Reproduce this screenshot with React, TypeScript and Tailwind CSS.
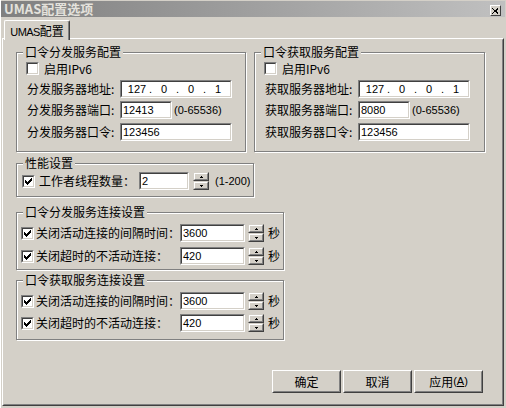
import React from "react";

const CJK = "font-['Noto_Sans_CJK_SC','Noto_Sans_CJK_JP',sans-serif]";
const LAT = "font-['Liberation_Sans',Arial,sans-serif]";

function Edit({ cls, children }: { cls: string; children?: React.ReactNode }) {
  return (
    <div className={`${cls} h-[18px] shrink-0 border border-t-[#808080] border-l-[#808080] border-r-white border-b-white`}>
      <div className={`h-full w-full border border-t-[#404040] border-l-[#404040] border-r-[#d4d0c8] border-b-[#d4d0c8] bg-white flex items-center pl-[1px] text-[11px] leading-none text-black ${LAT}`}>
        {children}
      </div>
    </div>
  );
}

function Check({ checked }: { checked?: boolean }) {
  return (
    <div className="w-[13px] h-[13px] shrink-0 border border-t-[#808080] border-l-[#808080] border-r-white border-b-white">
      <div className="h-full w-full border border-t-[#404040] border-l-[#404040] border-r-[#d4d0c8] border-b-[#d4d0c8] bg-white">
        {checked && (
          <svg width="9" height="9" viewBox="0 0 9 9" className="block" shapeRendering="crispEdges">
            <g fill="#000">
              <rect x="7" y="1" width="1" height="1" />
              <rect x="6" y="2" width="2" height="1" />
              <rect x="1" y="3" width="1" height="1" />
              <rect x="5" y="3" width="3" height="1" />
              <rect x="1" y="4" width="2" height="1" />
              <rect x="4" y="4" width="3" height="1" />
              <rect x="1" y="5" width="5" height="1" />
              <rect x="2" y="6" width="3" height="1" />
              <rect x="3" y="7" width="1" height="1" />
            </g>
          </svg>
        )}
      </div>
    </div>
  );
}

function SpinBtn({ up }: { up?: boolean }) {
  return (
    <div className="h-[9px] w-full border border-t-[#d4d0c8] border-l-[#d4d0c8] border-r-[#404040] border-b-[#404040]">
      <div className="h-full w-full border border-t-white border-l-white border-r-[#808080] border-b-[#808080] bg-[#d4d0c8] flex items-center justify-center">
        <svg width="3" height="2" viewBox="0 0 3 2" className="block" shapeRendering="crispEdges">
          {up ? (
            <g fill="#000">
              <rect x="1" y="0" width="1" height="1" />
              <rect x="0" y="1" width="3" height="1" />
            </g>
          ) : (
            <g fill="#000">
              <rect x="0" y="0" width="3" height="1" />
              <rect x="1" y="1" width="1" height="1" />
            </g>
          )}
        </svg>
      </div>
    </div>
  );
}

function Spin({ cls }: { cls: string }) {
  return (
    <div className={`${cls} w-[16px] h-[18px] shrink-0 flex flex-col`}>
      <SpinBtn up />
      <SpinBtn />
    </div>
  );
}

function Group({ title, cls, children }: { title: string; cls: string; children?: React.ReactNode }) {
  return (
    <fieldset className={`${cls} shrink-0 border border-[#808080] shadow-[1px_1px_0_#ffffff,inset_1px_1px_0_#ffffff]`}>
      <legend className={`ml-[6px] px-[2px] h-[14px] leading-[14px] text-[12px] bg-[#d4d0c8] ${CJK}`}>{title}</legend>
      {children}
    </fieldset>
  );
}

function Button({ children }: { children: React.ReactNode }) {
  return (
    <div className="w-[69px] h-[23px] border border-t-white border-l-white border-r-[#404040] border-b-[#404040]">
      <div className={`h-full w-full border border-t-[#d4d0c8] border-l-[#d4d0c8] border-r-[#808080] border-b-[#808080] flex items-center justify-center text-[12px] leading-none ${CJK}`}>
        {children}
      </div>
    </div>
  );
}

function ServerGroup({ title, prefix, port, cls }: { title: string; prefix: string; port: string; cls: string }) {
  return (
    <Group title={title} cls={cls}>
      <div className="mt-[3px] ml-[9px] h-[13px] flex items-center">
        <Check />
        <span className={`ml-[5px] text-[12px] leading-none ${CJK}`}>启用IPv6</span>
      </div>
      <div className="mt-[5px] ml-[10px] flex items-center h-[18px]">
        <span className={`w-[93px] shrink-0 text-[12px] leading-none ${CJK}`}>{prefix}服务器地址:</span>
        <Edit cls="w-[112px]">
          <div className="flex pl-[3px]">
            <span className="w-[22px] text-center">127</span>
            <span className="w-[5px] text-center">.</span>
            <span className="w-[22px] text-center">0</span>
            <span className="w-[5px] text-center">.</span>
            <span className="w-[22px] text-center">0</span>
            <span className="w-[5px] text-center">.</span>
            <span className="w-[22px] text-center">1</span>
          </div>
        </Edit>
      </div>
      <div className="mt-[3px] ml-[10px] flex items-center h-[18px]">
        <span className={`w-[93px] shrink-0 text-[12px] leading-none ${CJK}`}>{prefix}服务器端口:</span>
        <Edit cls="w-[52px]">{port}</Edit>
        <span className={`ml-[2px] text-[11px] leading-none ${LAT}`}>(0-65536)</span>
      </div>
      <div className="mt-[4px] ml-[10px] flex items-center h-[18px]">
        <span className={`w-[93px] shrink-0 text-[12px] leading-none ${CJK}`}>{prefix}服务器口令:</span>
        <Edit cls="w-[112px]">123456</Edit>
      </div>
    </Group>
  );
}

function ConnRow({ label, value, cls }: { label: string; value: string; cls: string }) {
  return (
    <div className={`${cls} flex items-center h-[18px]`}>
      <div className="ml-[4px]">
        <Check checked />
      </div>
      <span className={`ml-[2px] w-[144px] shrink-0 text-[12px] leading-none ${CJK}`}>{label}</span>
      <Edit cls="w-[65px]">{value}</Edit>
      <Spin cls="ml-[3px]" />
      <span className={`ml-[4px] text-[12px] leading-none ${CJK}`}>秒</span>
    </div>
  );
}

export default function App() {
  return (
    <div className="w-[506px] h-[408px] bg-[#d4d0c8] border-l border-l-white text-black overflow-hidden select-none">
      <div className="mt-[1px] w-[504px] h-[16px] bg-linear-to-r from-[#808080] to-[#c0c0c0] flex items-end justify-between pl-[3px] pr-[4px] pb-[1px]">
        <span className={`self-center text-[13px] font-bold leading-none text-[#e4e2dc] ${CJK}`}>UMAS配置选项</span>
        <div className="w-[11px] h-[11px] border border-t-white border-l-white border-r-[#404040] border-b-[#404040] bg-[#d4d0c8] flex items-center justify-center">
          <svg width="7" height="6" viewBox="0 0 7 6" className="block" shapeRendering="crispEdges">
            <path d="M0.5 0.5 L6 5.5 M6 0.5 L0.5 5.5" stroke="#000" strokeWidth="1.2" />
          </svg>
        </div>
      </div>

      <div className="mt-[3px] pl-[1px]">
        <div className="relative z-10 ml-[2px] -mb-[2px] w-[66px] h-[20px] bg-[#d4d0c8] border-l border-t border-l-white border-t-white border-r border-r-[#404040] rounded-tl-[2px] rounded-tr-[2px] shadow-[inset_-1px_0_0_#808080] flex justify-center pt-[3px]">
          <span className={`text-[12px] leading-[14px] ${CJK}`}>
            <span className={`${LAT} text-[11px] tracking-[-0.6px]`}>UMAS</span>配置
          </span>
        </div>
        <div className="w-[502px] h-[368px] border border-t-white border-l-white border-r-[#404040] border-b-[#404040]">
          <div className="h-full w-full border border-t-[#d4d0c8] border-l-[#d4d0c8] border-r-[#808080] border-b-[#808080] pl-[12px] pt-[5px] flex flex-col items-start">
            <div className="flex gap-[8px]">
              <ServerGroup title="口令分发服务配置" prefix="分发" port="12413" cls="w-[230px] h-[107px]" />
              <ServerGroup title="口令获取服务配置" prefix="获取" port="8080" cls="w-[231px] h-[107px]" />
            </div>

            <Group title="性能设置" cls="mt-[4px] w-[238px] h-[41px]">
              <div className="mt-[2px] flex items-center h-[18px]">
                <div className="ml-[5px]">
                  <Check checked />
                </div>
                <span className={`ml-[4px] w-[100px] shrink-0 text-[12px] leading-none ${CJK}`}>工作者线程数量：</span>
                <Edit cls="w-[50px]">2</Edit>
                <Spin cls="ml-[4px]" />
                <span className={`ml-[6px] text-[11px] leading-none ${LAT}`}>(1-200)</span>
              </div>
            </Group>

            <Group title="口令分发服务连接设置" cls="mt-[8px] w-[268px] h-[65px]">
              <ConnRow cls="mt-[5px]" label="关闭活动连接的间隔时间：" value="3600" />
              <ConnRow cls="mt-[5px]" label="关闭超时的不活动连接：" value="420" />
            </Group>

            <Group title="口令获取服务连接设置" cls="mt-[3px] w-[268px] h-[67px]">
              <ConnRow cls="mt-[5px]" label="关闭活动连接的间隔时间：" value="3600" />
              <ConnRow cls="mt-[4px]" label="关闭超时的不活动连接：" value="420" />
            </Group>

            <div className="mt-[30px] self-stretch flex justify-end gap-[2px] pr-[19px]">
              <Button>确定</Button>
              <Button>取消</Button>
              <Button>
                应用<span className={`${LAT} text-[11px]`}>(<span className="underline">A</span>)</span>
              </Button>
            </div>
          </div>
        </div>
      </div>
    </div>
  );
}
